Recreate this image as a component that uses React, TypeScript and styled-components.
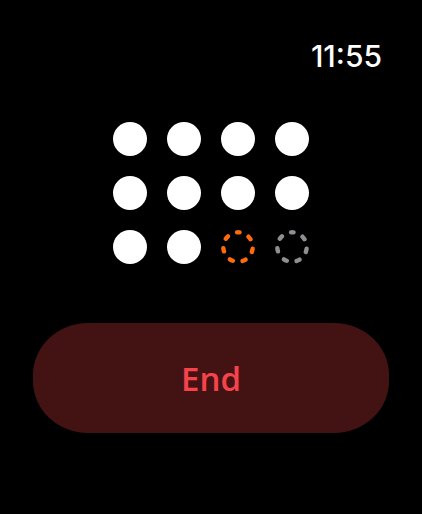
import React from "react";
import styled, { createGlobalStyle } from "styled-components";

const GlobalStyle = createGlobalStyle`
  html, body {
    margin: 0;
    padding: 0;
    background: #000;
  }
`;

type DotState = "filled" | "active" | "pending";

const dots: DotState[] = [
  "filled", "filled", "filled", "filled",
  "filled", "filled", "filled", "filled",
  "filled", "filled", "active", "pending",
];

const ringColor: Record<"active" | "pending", string> = {
  active: "#ff6a0c",
  pending: "#8e8e93",
};

const DashedRing: React.FC<{ color: string }> = ({ color }) => {
  const r = 14.7;
  const circ = 2 * Math.PI * r;
  const period = circ / 7;
  const dash = 3.2;
  return (
    <svg width="34" height="34" viewBox="0 0 34 34">
      <circle
        cx="17"
        cy="17"
        r={r}
        fill="none"
        stroke={color}
        strokeWidth="4.4"
        strokeLinecap="round"
        strokeDasharray={`${dash} ${period - dash}`}
        strokeDashoffset={dash / 2}
        transform="rotate(-90 17 17)"
      />
    </svg>
  );
};

const App: React.FC = () => {
  return (
    <>
      <GlobalStyle />
      <Screen>
        <StatusBar>
          <Clock>11:55</Clock>
        </StatusBar>
        <DotGrid>
          {dots.map((d, i) =>
            d === "filled" ? (
              <Dot key={i} />
            ) : (
              <RingSlot key={i}>
                <DashedRing color={ringColor[d]} />
              </RingSlot>
            )
          )}
        </DotGrid>
        <EndButton>End</EndButton>
      </Screen>
    </>
  );
};

const Screen = styled.div`
  display: flex;
  flex-direction: column;
  align-items: center;
  width: 422px;
  height: 514px;
  background: #000;
`;

const StatusBar = styled.div`
  display: flex;
  justify-content: flex-end;
  align-self: stretch;
  padding: 41px 40px 0 0;
`;

const Clock = styled.span`
  font-family: Inter, "Liberation Sans", sans-serif;
  font-size: 30px;
  font-weight: 500;
  line-height: 30px;
  color: #fff;
`;

const DotGrid = styled.div`
  display: grid;
  grid-template-columns: repeat(4, 34px);
  grid-auto-rows: 34px;
  gap: 20px;
  margin-top: 51px;
`;

const Dot = styled.div`
  width: 34px;
  height: 34px;
  border-radius: 50%;
  background: #fff;
`;

const RingSlot = styled.div`
  display: flex;
  width: 34px;
  height: 34px;
`;

const EndButton = styled.button`
  display: flex;
  align-items: center;
  justify-content: center;
  width: 356px;
  height: 110px;
  margin-top: 59px;
  border: none;
  border-radius: 55px / 52px;
  background: #431314;
  color: #f6434b;
  font-family: "Open Sans", "Noto Sans", sans-serif;
  font-size: 33px;
  font-weight: 600;
  padding: 0;
`;

export default App;
